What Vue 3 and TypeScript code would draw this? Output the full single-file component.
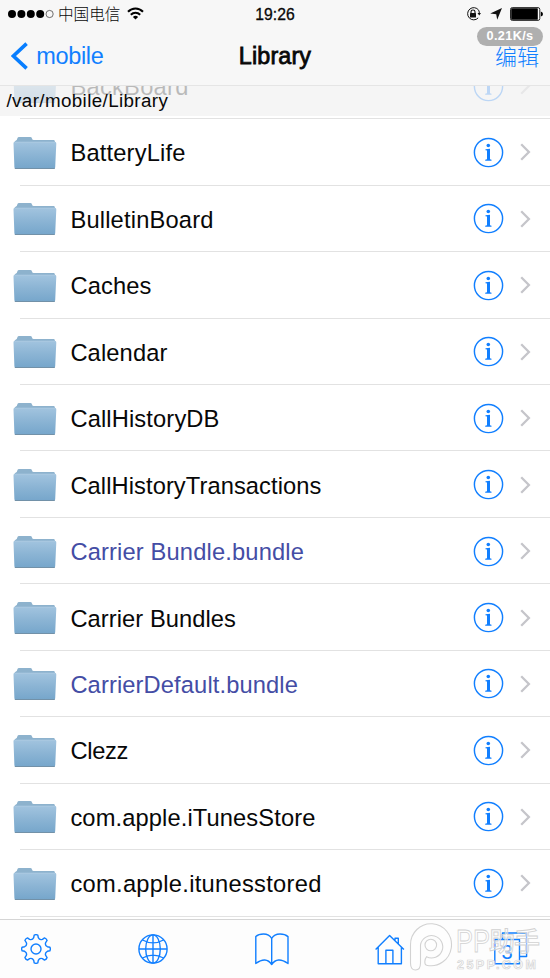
<script setup lang="ts">
interface Entry {
  name: string
  width: number
  bundle?: boolean
}

const entries: Entry[] = [
  { name: 'BackBoard', width: 118 },
  { name: 'BatteryLife', width: 115 },
  { name: 'BulletinBoard', width: 143 },
  { name: 'Caches', width: 81 },
  { name: 'Calendar', width: 97 },
  { name: 'CallHistoryDB', width: 149 },
  { name: 'CallHistoryTransactions', width: 251 },
  { name: 'Carrier Bundle.bundle', width: 233.5, bundle: true },
  { name: 'Carrier Bundles', width: 165.5 },
  { name: 'CarrierDefault.bundle', width: 227.5, bundle: true },
  { name: 'Clezz', width: 58 },
  { name: 'com.apple.iTunesStore', width: 245 },
  { name: 'com.apple.itunesstored', width: 251 },
]

// Outline of the eight-toothed settings gear, centred on (15, 15).
const gearPath: string = (() => {
  const points: string[] = []
  const step = Math.PI / 4
  const pt = (r: number, a: number) =>
    `${(15 + r * Math.sin(a)).toFixed(2)} ${(15 - r * Math.cos(a)).toFixed(2)}`
  for (let i = 0; i < 8; i++) {
    const a = i * step
    points.push(`${i ? 'L' : 'M'}${pt(11.6, a - 0.2)}`)
    points.push(`L${pt(14, a - 0.13)}`)
    points.push(`Q${pt(14.8, a)} ${pt(14, a + 0.13)}`)
    points.push(`L${pt(11.6, a + 0.2)}`)
    points.push(`Q${pt(9.4, a + step / 2)} ${pt(11.6, a + step - 0.2)}`)
  }
  return points.join('') + 'Z'
})()
</script>

<template>
  <div class="screen">
    <header class="header">
      <div class="status">
        <div class="carrier">
          <svg class="signal" width="46" height="10" viewBox="0 0 46 10">
            <circle v-for="n in 4" :key="n" :cx="n * 9.4 - 5.4" cy="5" r="4" fill="#000" />
            <circle cx="41.6" cy="5" r="3.6" fill="none" stroke="#333" stroke-width=".7" />
          </svg>
          <span class="carrier-name">中国电信</span>
          <svg class="wifi" width="17" height="13" viewBox="0 0 17 13" fill="none" stroke="#000" stroke-width="2">
            <path d="M1 4.8C5.2.3 11.8.3 16 4.8M3.8 7.8C6.5 5 10.5 5 13.2 7.8" />
            <path d="M5.9 9.9C7.3 8.5 9.7 8.5 11.1 9.9L8.5 12.5Z" fill="#000" stroke="none" />
          </svg>
        </div>
        <span class="clock">19:26</span>
        <div class="indicators">
          <svg width="15" height="14" viewBox="0 0 15 14">
            <path d="M12.7 3.2A6.1 6.1 0 1 0 12.2 10.9M12.7 3.2A6 6 0 0 1 13.2 7" fill="none" stroke="#111" stroke-width="1" />
            <path d="M11.5 6H15L13.2 8.6Z" fill="#111" />
            <rect x="4" y="6" width="6" height="4.6" rx=".5" fill="#111" />
            <path d="M5 6.2V4.8Q5 3 7 3T9 4.8V6.2" fill="none" stroke="#111" stroke-width="1.1" />
          </svg>
          <svg width="12" height="12" viewBox="0 0 12 12">
            <path d="M12 0L7.2 11.7L6.2 6.2L.2 5.5Z" fill="#111" />
          </svg>
          <svg width="33" height="14" viewBox="0 0 33 14">
            <rect x=".5" y=".6" width="29.3" height="12.8" rx="1.8" fill="#fff" stroke="#111" stroke-width=".9" />
            <rect x="1.2" y="1.2" width="26.6" height="11.6" rx=".6" />
            <path d="M30.8 4.5Q33 5 33 7T30.8 9.5Z" />
          </svg>
        </div>
      </div>
      <nav class="nav">
        <a class="back">
          <svg width="17" height="28" viewBox="0 0 17 28">
            <path d="M15.6 1.6L2.4 14L15.6 26.4" fill="none" stroke="#087eff" stroke-width="3.6" />
          </svg>
          <svg class="back-label" width="70" height="30">
            <text x="0.3" y="23" textLength="67.5">mobile</text>
          </svg>
        </a>
        <h1>Library</h1>
        <a class="edit">编辑</a>
      </nav>
      <span class="speed">0.21K/s</span>
    </header>

    <main class="content">
      <div class="path-bar">/var/mobile/Library</div>
      <ul class="list">
        <li v-for="entry in entries" :key="entry.name" class="row">
          <svg class="folder" width="44" height="34" viewBox="0 0 44 34">
            <defs>
              <linearGradient id="front" x1="0" y1="0" x2="0" y2="1">
                <stop offset="0" stop-color="#a2c4df" />
                <stop offset=".5" stop-color="#8bb4d4" />
                <stop offset="1" stop-color="#76a6cb" />
              </linearGradient>
            </defs>
            <path d="M1.8 5.2Q4.2 4.8 4.5 2Q4.8 1 6 1H17.2Q18.7 1 19 2.4Q19.3 4 20.8 4H40.7Q42 4 42 6V11H1.8Z" fill="#8db2cd" />
            <path d="M.5 7.5Q.3 5.8 2 5.8H41.6Q43.5 5.8 43.3 7.6L42.2 31.3Q42.1 32.6 40.8 32.6H2.7Q1.5 32.6 1.4 31.3Z" fill="url(#front)" />
            <path d="M1.5 6.3H42.4" stroke="#b2cde1" stroke-width=".6" />
            <path d="M1.8 32.5H41.8" stroke="#7291a8" stroke-width="1" />
          </svg>
          <div class="cell">
            <svg class="name" width="380" height="34">
              <text
                x="0.4"
                y="25.7"
                :textLength="entry.width"
                :class="{ bundle: entry.bundle }"
              >{{ entry.name }}</text>
            </svg>
            <svg class="info" width="31" height="31" viewBox="0 0 31 31">
              <circle cx="15.5" cy="15.5" r="14.1" fill="none" stroke="#117fff" stroke-width="1.45" />
              <circle cx="15.3" cy="8.5" r="1.8" fill="#117fff" />
              <path d="M12.5 12.3L17 11.8V22.3L18.5 22.8V23.7H12.2V22.8L14 22.3V13.5L12.5 13.2Z" fill="#117fff" />
            </svg>
            <svg class="chevron" width="11" height="18" viewBox="0 0 11 18">
              <path d="M1.2 1.3L8.9 9L1.2 16.7" fill="none" stroke="#c5c5ca" stroke-width="2.3" />
            </svg>
          </div>
        </li>
      </ul>
    </main>

    <footer class="toolbar">
      <svg width="30" height="30" viewBox="0 0 30 30">
        <path :d="gearPath" />
        <circle cx="15" cy="15" r="5" />
      </svg>
      <svg width="30" height="30" viewBox="0 0 30 30">
        <circle cx="15" cy="15" r="14.1" />
        <ellipse cx="15" cy="15" rx="7.3" ry="14.1" />
        <path d="M15 1V29M1 15H29M4.5 6Q15 11.8 25.5 6M4.5 24Q15 18.2 25.5 24" />
      </svg>
      <svg class="book" width="34" height="33" viewBox="0 0 34 33">
        <path d="M16.7 5.5Q14.2 1 8.5 1Q3.5 1 .8 3.6V30.5Q11 23 16.7 31.5Q22.4 23 33 30.5V3.6Q30 1 25 1Q19.2 1 16.7 5.5ZM16.7 5.5V31.5" />
      </svg>
      <svg width="30" height="31" viewBox="0 0 30 31">
        <path d="M.6 15.6L14.6 1.4L28.9 15.6M3.2 13.3V29.7H26.4V13.3M10.9 29.7V16.3H17.9V29.7M20 6.5V4.2H23.3V9.8" />
      </svg>
      <svg class="tabs" width="34" height="34" viewBox="0 0 34 34">
        <path d="M8.5 7.5V1H32.6V24.5H25.5" />
        <rect x=".8" y="7.5" width="24.7" height="24.3" />
        <text x="13.1" y="26.8" text-anchor="middle">3</text>
      </svg>
    </footer>

    <svg class="watermark" width="134" height="52" viewBox="0 0 134 52">
      <g fill="#fff" fill-opacity=".5" stroke="#d2d2d2" stroke-width="1.1">
        <path d="M1.5 22A20.5 21 0 1 1 17.5 42.2Q15.8 41.8 15.8 38.8T17.5 33.8A11.2 11.2 0 1 0 11.5 22V40Q11.5 47 6.5 47T1.5 40Z" />
        <circle cx="21.8" cy="22" r="5.8" />
        <text class="brand latin" x="47" y="28.5" textLength="34" lengthAdjust="spacingAndGlyphs">PP</text>
        <text class="brand" x="80" y="27.5" textLength="51">助手</text>
      </g>
      <text class="site" x="48" y="46" textLength="79">25PP.COM</text>
    </svg>
  </div>
</template>

<style>
body {
  margin: 0;
}
</style>

<style scoped>
.screen {
  position: relative;
  width: 550px;
  height: 978px;
  display: flex;
  flex-direction: column;
  overflow: hidden;
  background: #fff;
  color: #080808;
  font-family: "Liberation Sans", "Noto Sans CJK SC", sans-serif;
}
svg {
  display: block;
  flex: none;
}
.header {
  position: relative;
  box-sizing: border-box;
  height: 86px;
  flex: none;
  background: #f7f7f7;
  border-bottom: 1px solid #e5e5e5;
}
.status {
  display: grid;
  grid-template-columns: 1fr 1fr 1fr;
  align-items: center;
  height: 27px;
  padding: 0 7px 0 8px;
}
.carrier {
  display: flex;
  align-items: center;
}
.carrier-name {
  margin: -2px 7px 0 4px;
  font-family: "Noto Sans CJK SC", sans-serif;
  font-weight: 300;
  font-size: 15.6px;
  line-height: 26px;
}
.wifi {
  margin-bottom: 1px;
}
.clock {
  text-align: center;
  font-size: 15.7px;
  -webkit-text-stroke: 0.3px #080808;
  padding: 2px 1px 0 0;
}
.indicators {
  display: flex;
  align-items: center;
  justify-content: flex-end;
  gap: 9px;
}
.indicators svg:last-child {
  margin-left: -1px;
}
.nav {
  display: grid;
  grid-template-columns: 1fr auto 1fr;
  align-items: center;
  height: 58px;
  padding: 0 11px 0 11px;
}
.back {
  display: flex;
  align-items: center;
  gap: 8px;
}
.back-label text {
  font-size: 23.5px;
  fill: #117fff;
}
h1 {
  margin: 0;
  font-size: 23.3px;
  font-weight: 400;
  -webkit-text-stroke: 0.8px #080808;
  letter-spacing: 0.15px;
}
.edit {
  justify-self: end;
  margin-top: -3px;
  color: #117fff;
  font-family: "Noto Sans CJK SC", sans-serif;
  font-weight: 300;
  font-size: 22px;
  line-height: 30px;
}
.speed {
  position: absolute;
  top: 27px;
  left: 477px;
  width: 66px;
  height: 19px;
  border-radius: 10px;
  background: rgba(165, 165, 165, 0.88);
  color: #fff;
  font-size: 12.7px;
  font-weight: 700;
  letter-spacing: 0.35px;
  line-height: 19px;
  text-align: center;
}
.content {
  position: relative;
  height: 833px;
  flex: none;
  overflow: hidden;
}
.path-bar {
  position: absolute;
  z-index: 1;
  top: 0;
  left: 0;
  right: 0;
  box-sizing: border-box;
  height: 29.5px;
  padding-left: 6.5px;
  background: rgba(242, 242, 242, 0.76);
  font-size: 18.8px;
  letter-spacing: 0.38px;
  line-height: 29px;
}
.list {
  margin: -33.2px 0 0;
  padding: 0;
  list-style: none;
}
.row {
  display: flex;
  align-items: center;
  height: 66.45px;
  padding-left: 13px;
  background: linear-gradient(#e2e2e2, #e2e2e2) 20px 100% / 100% 1px no-repeat;
}
.folder {
  margin: 1px 0 0 -0.4px;
}
.cell {
  display: flex;
  align-items: center;
  flex: 1;
  padding: 0 19.5px 0 13px;
}
.name {
  flex: 1;
  min-width: 0;
}
.name text {
  font-size: 23.7px;
  fill: #080808;
}
.name text.bundle {
  fill: #444da5;
}
.info {
  margin-right: 15.2px;
}
.toolbar {
  display: grid;
  grid-template-columns: 117px 117px 120px 119px 34px;
  align-items: center;
  box-sizing: border-box;
  height: 59px;
  padding-left: 21px;
  border-top: 1px solid #d5d5d5;
  background: #fdfdfd;
}
.toolbar svg {
  fill: none;
  stroke: #117fff;
  stroke-width: 1.4;
  stroke-linejoin: round;
}
.toolbar .tabs text {
  font-size: 20px;
  fill: #117fff;
  stroke: none;
}
.watermark {
  position: absolute;
  left: 409px;
  top: 923px;
}
.brand {
  font-family: "Noto Sans CJK SC", sans-serif;
  font-size: 26px;
  font-weight: 500;
  stroke-width: 0.9;
}
.brand.latin {
  font-family: "Liberation Sans", sans-serif;
  font-size: 32px;
}
.site {
  font-size: 12.5px;
  font-weight: 700;
  fill: #fff;
  fill-opacity: 0.7;
  stroke: #d4d4d4;
  stroke-width: 0.7;
}
</style>
